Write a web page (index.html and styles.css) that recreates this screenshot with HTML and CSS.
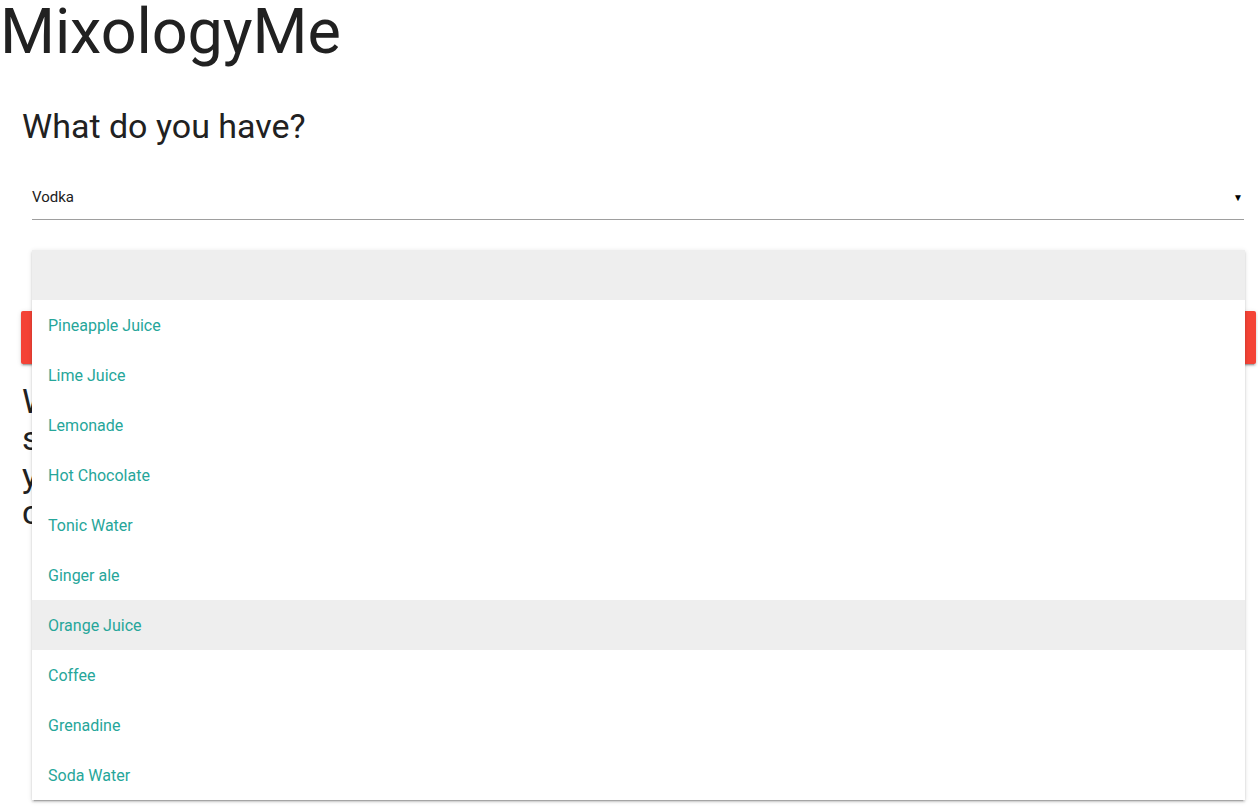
FILE: index.html
```html
<!DOCTYPE html>
<html>
<head>
<meta charset="utf-8">
<link rel="stylesheet" href="styles.css">
</head>
<body>
<h1 class="brand">MixologyMe</h1>
<main class="content">
  <h4 class="question">What do you have?</h4>
  <div class="select-wrap">
    <div class="select">
      <span class="select-value">Vodka</span>
      <span class="select-caret">▼</span>
    </div>
    <ul class="dropdown">
      <li class="opt opt-active"></li>
      <li class="opt">Pineapple Juice</li>
      <li class="opt">Lime Juice</li>
      <li class="opt">Lemonade</li>
      <li class="opt">Hot Chocolate</li>
      <li class="opt">Tonic Water</li>
      <li class="opt">Ginger ale</li>
      <li class="opt opt-active">Orange Juice</li>
      <li class="opt">Coffee</li>
      <li class="opt">Grenadine</li>
      <li class="opt">Soda Water</li>
    </ul>
  </div>
  <button class="btn-red">Find Cocktails</button>
  <h4 class="intro">Welcome! Pick the ingredients you have<br>so that we can find the drinks<br>you can mix right now with<br>cheers from MixologyMe</h4>
</main>
</body>
</html>
```

FILE: styles.css
```css
html, body {
  margin: 0;
  padding: 0;
  background: #ffffff;
  font-family: Roboto, "Noto Sans", sans-serif;
  color: rgba(0, 0, 0, 0.87);
}

body {
  min-height: 807px;
}

.brand {
  margin: 0;
  font-size: 63px;
  line-height: 63px;
  font-weight: 400;
  color: #212121;
  letter-spacing: -0.1px;
}

.content {
  padding: 45px 2px 0 21px;
}

.question {
  margin: 0 0 0 1px;
  font-size: 34px;
  line-height: 37.4px;
  font-weight: 400;
  color: #212121;
}

.select-wrap {
  position: relative;
  margin: 29px 12px 0 11px;
}

.select {
  height: 45px;
  border-bottom: 1px solid #9e9e9e;
  display: flex;
  align-items: center;
  justify-content: space-between;
}

.select-value {
  font-size: 15px;
  color: #212121;
}

.select-caret {
  font-size: 10px;
  color: #000;
  padding-right: 1px;
  padding-top: 2px;
}

.dropdown {
  position: absolute;
  top: 76px;
  left: 0;
  width: 1213px;
  margin: 0;
  padding: 0;
  list-style: none;
  background: #fff;
  box-shadow: 0 2px 2px 0 rgba(0,0,0,0.14), 0 1px 5px 0 rgba(0,0,0,0.12), 0 3px 1px -2px rgba(0,0,0,0.2);
  z-index: 10;
}

.opt {
  height: 50px;
  box-sizing: border-box;
  padding: 0 16px;
  display: flex;
  align-items: center;
  font-size: 16px;
  color: #26a69a;
}

.opt-active {
  background: #eeeeee;
}

.btn-red {
  display: block;
  width: 1235px;
  height: 53px;
  margin: 91px 0 0 0;
  border: none;
  border-radius: 2px;
  background: #f44336;
  color: #fff;
  font-family: Roboto, sans-serif;
  font-size: 15px;
  text-transform: uppercase;
  box-shadow: 0 2px 2px 0 rgba(0,0,0,0.14), 0 1px 5px 0 rgba(0,0,0,0.12), 0 3px 1px -2px rgba(0,0,0,0.2);
}

.intro {
  margin: 19px 0 0 1px;
  font-size: 34px;
  line-height: 37px;
  font-weight: 400;
  color: #212121;
}
```
